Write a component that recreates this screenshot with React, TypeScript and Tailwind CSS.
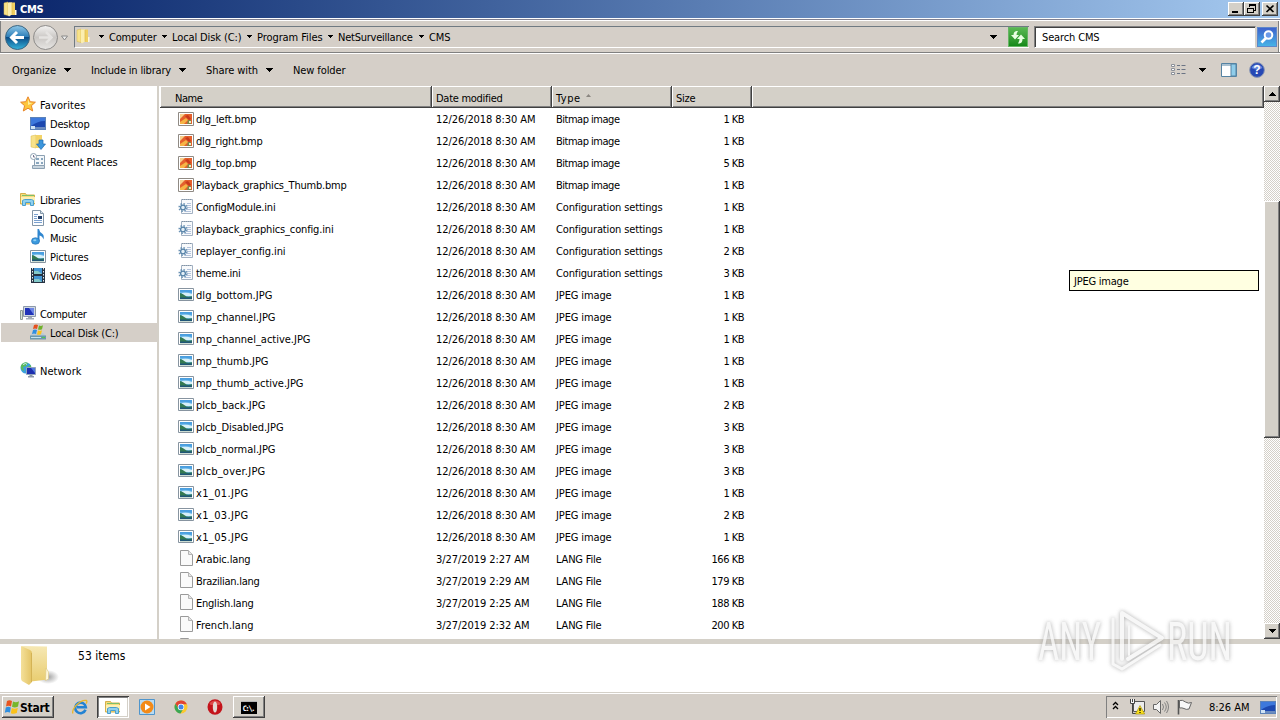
import { useLayoutEffect, useRef, useState, type ReactNode } from "react";

type IconName =
  | "star" | "desktop" | "downloads" | "recent" | "libraries" | "documents" | "music"
  | "pictures" | "videos" | "computer" | "disk" | "network" | "bmp" | "ini" | "jpg" | "file";

// Label with a fixed advance: spreads or tightens the letters to fill w pixels
function Label({ w, children, className = "" }: { w: number; children: string; className?: string }) {
  const ref = useRef<HTMLSpanElement | null>(null);
  const [spacing, setSpacing] = useState(0);

  useLayoutEffect(() => {
    const el = ref.current;
    if (!el) return;
    const prev = el.style.letterSpacing;
    el.style.letterSpacing = "0px";
    const natural = el.getBoundingClientRect().width;
    el.style.letterSpacing = prev;
    setSpacing((w - 0.5 - natural) / children.length);
  }, [w, children]);

  return (
    <span ref={ref} className={`inline-block shrink-0 whitespace-pre pt-[2px] ${className}`} style={{ letterSpacing: `${spacing}px` }}>
      {children}
    </span>
  );
}

function Svg({ size = 16, children, className = "" }: { size?: number; children: ReactNode; className?: string }) {
  return (
    <svg width={size} height={size} viewBox="0 0 16 16" className={`block shrink-0 ${className}`}>
      {children}
    </svg>
  );
}

function FolderIcon() {
  return (
    <Svg>
      <path d="M2 2 6 1v13.500l-4-1z" fill="#f8e28a" stroke="#d9b84c" strokeWidth=".5" />
      <path d="M7 1.500h6V14H7z" fill="#f0cf62" />
      <path d="M6 1.500h4v12l-3 2-1-1z" fill="#fbeeb0" />
      <path d="M10 2v11.500" stroke="#dcb94c" strokeWidth=".7" />
      <path d="M13 9h1.500v5H13z" fill="#fff8dc" />
    </Svg>
  );
}

function LibraryFolder({ size = 16 }: { size?: number }) {
  return (
    <Svg size={size}>
      <path d="M.5 2.500h5l1 1.500h8v9H.5z" fill="#f6dc7c" stroke="#d5b04a" />
      <path d="M2 4.500h12" stroke="#7bbf6a" />
      <path d="M1 6h14v6H1z" fill="#fdf0b4" />
      <path d="M2.500 14.500v-5l2-1h7l2 1v5h-3v-3h-5v3z" fill="#8fd0ee" stroke="#4a9fcd" />
    </Svg>
  );
}

function MonitorIcon({ size = 16 }: { size?: number }) {
  return (
    <Svg size={size}>
      <path d="M0 2h16v13H0z" fill="#5c82b8" />
      <path d="M1 3h14v9H1z" fill="#1c48b0" />
      <path d="M1 3h14v3C9 6 5 8 1 11z" fill="#3d78dc" />
      <path d="M1 12h14v2H1z" fill="#6c8cc0" />
      <path d="M1 11h4v3H1z" fill="#cfe3f5" />
    </Svg>
  );
}

function WindowsFlag({ size = 16 }: { size?: number }) {
  return (
    <Svg size={size}>
      <path d="M3 2q2.500-1.400 5 0L7 7.500q-2.500-1.300-5 0z" fill="#e8541f" />
      <path d="M9 2.500q3 1.500 6-.3l-1 5.300q-3 1.800-6 .3z" fill="#77b62a" />
      <path d="M1.800 8.500q2.500-1.300 5 0L6 13.500q-2.600-1.200-5.200.2z" fill="#2f8fe0" />
      <path d="M7.800 9q3 1.400 6-.3l-1 5.300q-3 1.500-6 .2z" fill="#fbc21a" />
    </Svg>
  );
}

function Icon({ name }: { name: IconName }) {
  switch (name) {
    case "star":
      return (
        <Svg>
          <path d="M8 .8 10.200 5.700l5.200.5-4 3.500 1.300 5.300L8 12.200 3.300 15l1.300-5.300-4-3.500 5.200-.5z" fill="#fdc63c" stroke="#e8852a" />
          <path d="M8 3 9.300 6.800 12.500 7 8 9z" fill="#fff0a0" />
        </Svg>
      );
    case "desktop":
      return <MonitorIcon />;
    case "downloads":
      return (
        <Svg>
          <path d="M1 2 6 1v13l-5-1z" fill="#f8e28a" stroke="#d9b84c" strokeWidth=".5" />
          <path d="M6 1h6v13H6z" fill="#f3d368" />
          <path d="M9 6h4v4h2.500L11 15.500 6.500 10H9z" fill="#3c96dc" stroke="#1d6ab0" strokeWidth=".7" />
        </Svg>
      );
    case "recent":
      return (
        <Svg>
          <path d="M4.500 2.500h10v10h-10z" fill="#f3f7fa" stroke="#8ca0b2" />
          <path d="M6 5h3v2H6zM11 5h2v2h-2zM6 9h3v2H6zM11 9h2v2h-2z" fill="#88a5bd" />
          <path d="M2.500 12.500h12v3h-12z" fill="#c9d5de" stroke="#8ca0b2" />
          <circle cx="3.500" cy="3.500" r="3" fill="#fff" stroke="#8fa3b3" />
          <path d="M3.500 2v2h1.500" fill="none" stroke="#557" strokeWidth=".8" />
        </Svg>
      );
    case "libraries":
      return <LibraryFolder />;
    case "documents":
      return (
        <Svg>
          <path d="M2.500.5h8l3 3v12h-11z" fill="#fbfdff" stroke="#8396a8" />
          <path d="M10.500.5v3h3" fill="#d6e2ec" stroke="#8396a8" />
          <path d="M4 4.500h4M4 6.500h3M4 8.500h3M4 10.500h8M4 12.500h8" stroke="#7aa0cf" />
          <path d="M8 6h4v3H8z" fill="#24406a" />
        </Svg>
      );
    case "music":
      return (
        <Svg>
          <path d="M7.500 0h1.500q.5 3 3 4.500t1.500 6q-1-3.500-4-4v6H7.500z" fill="#2f86cf" />
          <ellipse cx="5.500" cy="12" rx="4" ry="3.300" fill="#3b9ade" stroke="#1e6bb2" strokeWidth=".6" />
          <ellipse cx="4.800" cy="11.300" rx="1.600" ry="1" fill="#8fd0f5" />
        </Svg>
      );
    case "pictures":
    case "jpg":
      return (
        <Svg>
          <path d="M.5 2.500h15v12H.5z" fill="#fff" stroke="#8794a0" />
          <path d="M2 4h12v9H2z" fill="#6db8ea" />
          <path d="M2 4h12v3Q8 5 2 6z" fill="#4a9fe0" />
          <path d="M4 7q5-1 10 1v2H4z" fill="#d8f0f8" />
          <path d="M2 7q3 .5 5 2.500t7 .8v3H2z" fill="#347a52" />
          <path d="M2 11.500h12V13H2z" fill="#1f5678" />
        </Svg>
      );
    case "videos":
      return (
        <Svg>
          <path d="M1 1h14v15H1z" fill="#263343" />
          <path d="M4 1h8v6H4zM4 9h8v6H4z" fill="#4496d4" />
          <path d="M4 4h4l4 3H4zM4 12h5l3 3H4z" fill="#83c9c9" />
          <path d="M2.500 1v14M13.500 1v14" stroke="#e5edf3" strokeDasharray="1.500 1.500" />
        </Svg>
      );
    case "computer":
      return (
        <Svg>
          <path d="M.5 5.500h2v9h-2z" fill="#d9e4d4" stroke="#8d9a98" />
          <path d="M3.500 1.500h12v10h-12z" fill="#cfd8e2" stroke="#8d99aa" />
          <path d="M5 3h9v7H5z" fill="#2033b8" />
          <path d="M9 3h5v7z" fill="#6d86e6" />
          <path d="M8 12h4v1h2v1.500H6V13h2z" fill="#a3adb8" />
        </Svg>
      );
    case "disk":
      return (
        <Svg>
          <path d="M2 9h11l3 3H0z" fill="#b9cad6" />
          <path d="M0 11.500h16V15.500H0z" fill="#6c98ac" />
          <path d="M1 13.500h10" stroke="#c6e3ee" />
          <path d="M12 13h3v1h-3z" fill="#4fd048" />
          <path d="M4 1q2-1 4 0L7 5Q5 4 3 5z" fill="#e6501e" />
          <path d="M9 1.500q2 1 4-.2l-1 4q-2 1-4 .2z" fill="#6fb12a" />
          <path d="M3 6q2-1 4 0l-1 4q-2-1-4 0z" fill="#2f8fe0" />
          <path d="M8 6.500q2 1 4-.2l-1 4q-2 1-4 .2z" fill="#fbc21a" />
        </Svg>
      );
    case "network":
      return (
        <Svg>
          <circle cx="6" cy="6" r="5.500" fill="#3aa0dc" />
          <path d="M2 2q3-3 6-1L6 4 3 5l1 4-2-1Q-.5 5 2 2zM7 5l4-2v3z" fill="#5cbb58" />
          <path d="M3 2.500q3-2 4 0" stroke="#c9efff" fill="none" />
          <path d="M6.500 5.500h9v7h-9z" fill="#1d2fae" stroke="#93a4bb" />
          <path d="M11 6h4v5z" fill="#4f78e0" />
          <path d="M9.500 13h3v1h1.500v1.500H8V14h1.500z" fill="#8c98a8" />
        </Svg>
      );
    case "bmp":
      return (
        <Svg>
          <path d="M.5 2.500h15v13H.5z" fill="#fff" stroke="#8f8a84" />
          <path d="M2 4h12v10H2z" fill="#e4602c" />
          <path d="M2 4h5L2 9z" fill="#f7cf8a" />
          <path d="M2 12l6-4 2 2-4 4H2z" fill="#f6b545" />
          <path d="M7 6l3-1 3 4-2 1z" fill="#c8391c" />
          <path d="M10 10h3v4H9z" fill="#7c8b4a" />
          <path d="M11 11h2v2h-2z" fill="#efe7c0" />
        </Svg>
      );
    case "ini":
      return (
        <Svg>
          <path d="M3.500 1.500h11v14h-11z" fill="#f8fafc" stroke="#a3b1c2" />
          <path d="M4 1.500h10" stroke="#8394a4" strokeDasharray="1 1" />
          <path d="M9 5.500h4M9 7.500h4M9 9.500h4M8 11.500h5M7 13.500h6" stroke="#b3c3dc" />
          <circle cx="5" cy="9.500" r="3.800" fill="none" stroke="#6c93b5" strokeWidth="1.600" strokeDasharray="1.500 1.480" />
          <circle cx="5" cy="9.500" r="2.400" fill="#e4eff7" stroke="#5582a8" strokeWidth="1.300" />
        </Svg>
      );
    case "file":
      return (
        <Svg>
          <path d="M2.500.5h8l4 4v11h-12z" fill="#fafafa" stroke="#9a9a9a" />
          <path d="M10.500.5v4h4" fill="#e4e4e4" stroke="#b4b4b4" />
        </Svg>
      );
  }
}

const nav: ({ name: string; icon: IconName; w: number; child?: boolean; active?: boolean } | null)[] = [
  { name: "Favorites", icon: "star", w: 46 },
  { name: "Desktop", icon: "desktop", w: 40, child: true },
  { name: "Downloads", icon: "downloads", w: 53, child: true },
  { name: "Recent Places", icon: "recent", w: 68, child: true },
  null,
  { name: "Libraries", icon: "libraries", w: 41 },
  { name: "Documents", icon: "documents", w: 54, child: true },
  { name: "Music", icon: "music", w: 27, child: true },
  { name: "Pictures", icon: "pictures", w: 39, child: true },
  { name: "Videos", icon: "videos", w: 32, child: true },
  null,
  { name: "Computer", icon: "computer", w: 47 },
  { name: "Local Disk (C:)", icon: "disk", w: 69, child: true, active: true },
  null,
  { name: "Network", icon: "network", w: 42 },
];

const files: [string, number, IconName, string][] = [
  ["dlg_left.bmp", 61, "bmp", "1 KB"],
  ["dlg_right.bmp", 67, "bmp", "1 KB"],
  ["dlg_top.bmp", 61, "bmp", "5 KB"],
  ["Playback_graphics_Thumb.bmp", 151, "bmp", "1 KB"],
  ["ConfigModule.ini", 80, "ini", "1 KB"],
  ["playback_graphics_config.ini", 138, "ini", "1 KB"],
  ["replayer_config.ini", 90, "ini", "2 KB"],
  ["theme.ini", 45, "ini", "3 KB"],
  ["dlg_bottom.JPG", 77, "jpg", "1 KB"],
  ["mp_channel.JPG", 80, "jpg", "1 KB"],
  ["mp_channel_active.JPG", 115, "jpg", "1 KB"],
  ["mp_thumb.JPG", 73, "jpg", "1 KB"],
  ["mp_thumb_active.JPG", 108, "jpg", "1 KB"],
  ["plcb_back.JPG", 70, "jpg", "2 KB"],
  ["plcb_Disabled.JPG", 88, "jpg", "3 KB"],
  ["plcb_normal.JPG", 80, "jpg", "3 KB"],
  ["plcb_over.JPG", 70, "jpg", "3 KB"],
  ["x1_01.JPG", 53, "jpg", "1 KB"],
  ["x1_03.JPG", 53, "jpg", "2 KB"],
  ["x1_05.JPG", 53, "jpg", "1 KB"],
  ["Arabic.lang", 55, "file", "166 KB"],
  ["Brazilian.lang", 64, "file", "179 KB"],
  ["English.lang", 58, "file", "188 KB"],
  ["French.lang", 58, "file", "200 KB"],
];

const langDates = ["3/27/2019 2:27 AM", "3/27/2019 2:29 AM", "3/27/2019 2:25 AM", "3/27/2019 2:32 AM"];

const types: Record<string, [string, number]> = {
  bmp: ["Bitmap image", 64],
  ini: ["Configuration settings", 107],
  jpg: ["JPEG image", 56],
  file: ["LANG File", 46],
};

function Arrow({ up = false, small = false }: { up?: boolean; small?: boolean }) {
  if (small) {
    return (
      <svg width="5" height="3" className="block shrink-0" shapeRendering="crispEdges">
        <path d="M0 0h5v1H4v1H3v1H2V2H1V1H0z" />
      </svg>
    );
  }
  return (
    <svg width="7" height="4" className={`block shrink-0 ${up ? "rotate-180" : ""}`} shapeRendering="crispEdges">
      <path d="M0 0h7v1H6v1H5v1H4v1H3V3H2V2H1V1H0z" />
    </svg>
  );
}

const raised =
  "bg-[#d4d0c8] shadow-[inset_-1px_-1px_0_#404040,inset_1px_1px_0_#ffffff,inset_-2px_-2px_0_#808080]";

function TitleBar() {
  return (
    <div className="flex h-[18px] items-center bg-linear-to-r from-[#0a246a] to-[#a6caf0] pl-[2px] pr-[2px]">
      <FolderIcon />
      <Label w={24} className="ml-[2px] text-[11px] font-bold text-white">CMS</Label>
      <div className="ml-auto flex h-[14px]">
        <div className={`flex w-4 items-end pb-[3px] pl-1 ${raised}`}>
          <div className="h-[2px] w-[6px] bg-black" />
        </div>
        <div className={`w-4 ${raised}`}>
          <svg width="16" height="14" shapeRendering="crispEdges">
            <path d="M5.500 5V3.500h6v5H10M5 2.500h7M3.500 6.500h6v4h-6zM3 6h7" fill="none" stroke="#000" />
          </svg>
        </div>
        <div className={`ml-[2px] w-4 ${raised}`}>
          <svg width="16" height="14">
            <path d="M4.500 3.500l7 6.500M11.500 3.500l-7 6.500" stroke="#000" strokeWidth="1.700" />
          </svg>
        </div>
      </div>
    </div>
  );
}

function AddressBar() {
  const crumbs: [string, number, string][] = [
    ["Computer", 48, "w-[53px]"],
    ["Local Disk (C:)", 70, "w-[75px]"],
    ["Program Files", 66, "w-[71px]"],
    ["NetSurveillance", 75, "w-[81px]"],
    ["CMS", 22, "w-6"],
  ];
  return (
    <div className="flex h-9 border-t border-white bg-[#d5cfc8] shadow-[inset_0_1px_0_#808090,inset_0_2px_0_#ffffff,inset_0_-1px_0_#ffffff,inset_0_-2px_0_#808080,inset_1px_0_0_#808080,inset_-1px_0_0_#ffffff,inset_-2px_0_0_#808080]">
      <div className="flex pl-1 pt-[5px]">
        <svg width="70" height="28" className="block">
          <defs>
            <linearGradient id="back" x1="0" y1="0" x2="0" y2="1">
              <stop offset="0" stopColor="#8fc8e8" />
              <stop offset=".48" stopColor="#2b7db8" />
              <stop offset=".5" stopColor="#0a4d88" />
              <stop offset="1" stopColor="#36b4dc" />
            </linearGradient>
            <linearGradient id="fwd" x1="0" y1="0" x2="0" y2="1">
              <stop offset="0" stopColor="#f4f3f2" />
              <stop offset=".5" stopColor="#cac7c4" />
              <stop offset="1" stopColor="#e8e6e4" />
            </linearGradient>
          </defs>
          <circle cx="13.500" cy="13.500" r="12" fill="url(#back)" stroke="#3c6580" />
          <path d="M20 13.500H8M13 8l-5.500 5.500L13 19" fill="none" stroke="#fff" strokeWidth="3" />
          <circle cx="41.500" cy="13.500" r="12" fill="url(#fwd)" stroke="#8d8b89" />
          <path d="M35 13.500h12M42 8l5.500 5.500L42 19" fill="none" stroke="#e5e3e1" strokeWidth="2.500" />
          <path d="M57.500 12h6l-3 4z" fill="#eee" stroke="#888" />
        </svg>
      </div>
      <div className="mt-[7px] flex h-[22px] w-[955px] items-center border-b border-l border-t border-b-white border-l-[#707a82] border-t-[#707a82] text-[11px]">
        <div className="pb-[2px]"><FolderIcon /></div>
        <div className="ml-2 flex items-center pb-px">
          {crumbs.map(([name, w, box]) => (
            <div key={name} className="flex items-center">
              <Arrow small />
              <div className={`ml-[5px] flex shrink-0 ${box}`}>
                <Label w={w}>{name}</Label>
              </div>
            </div>
          ))}
        </div>
        <div className="ml-auto mr-[11px]"><Arrow /></div>
        <div className="mr-[1px] flex size-5 items-center justify-center border border-[#66b564] bg-linear-to-b from-[#58b852] to-[#138a18]">
          <svg width="18" height="18">
            <path d="M9 3H7.500Q4.500 3.500 4.500 7H2l4 4.500L10 7H7.500Q7.500 5 9 3z" fill="#e9ffe2" />
            <path d="M9 15.500h1.500Q13.500 15 13.500 11H16l-4-4.500L8 11h2.500q0 2.500-1.500 4.500z" fill="#e9ffe2" />
          </svg>
        </div>
      </div>
      <div className="ml-[5px] mt-[7px] flex h-[22px] w-[222px] items-center border border-b-white border-l-[#808080] border-r-[#d4d0c8] border-t-[#808080] bg-white pl-[7px] text-[11px] shadow-[inset_1px_1px_0_#404040]">
        <Label w={58}>Search CMS</Label>
      </div>
      <div className="ml-px mt-[8px] size-5 border border-[#5d87c9] bg-linear-to-b from-[#3e62cc] to-[#46b2e6]">
        <svg width="18" height="18">
          <circle cx="10.500" cy="7" r="3.800" fill="#6b9ae8" stroke="#fff" strokeWidth="2" />
          <path d="M8 10l-4.500 4.500" stroke="#fff" strokeWidth="2.600" />
        </svg>
      </div>
    </div>
  );
}

function Toolbar() {
  return (
    <div className="flex h-8 items-center bg-[#d5cfc8] pl-3 text-[11px]">
      <Label w={44.5}>Organize</Label>
      <div className="ml-2"><Arrow /></div>
      <Label w={80.5} className="ml-5">Include in library</Label>
      <div className="ml-2"><Arrow /></div>
      <Label w={52.5} className="ml-5">Share with</Label>
      <div className="ml-2"><Arrow /></div>
      <Label w={53} className="ml-5">New folder</Label>
      <svg width="17" height="14" className="ml-auto">
        <path d="M1.500 1.500h3v2h-3zM1.500 5.500h3v2h-3zM1.500 9.500h3v2h-3z" fill="#fff" stroke="#8b9099" />
        <path d="M7 2.500h3M7 6.500h3M7 10.500h3M11.500 2.500h4M11.500 6.500h4M11.500 10.500h4" stroke="#6b7484" />
      </svg>
      <div className="ml-[12px]"><Arrow /></div>
      <svg width="16" height="14" className="ml-[15px]">
        <path d="M.5.500h15v13H.5z" fill="#fff" stroke="#5583a3" />
        <path d="M1 2h9" stroke="#5583a3" />
        <path d="M10 1h5v12h-5z" fill="#8fcdea" stroke="#5583a3" />
      </svg>
      <svg width="16" height="16" className="ml-3 mr-[15px]">
        <circle cx="8" cy="8" r="7.400" fill="#2648b4" stroke="#8c98b4" />
        <path d="M2.500 6a6 6 0 0 1 11 0q-5 3-11 0z" fill="#6688dc" />
        <text x="8" y="12.200" textAnchor="middle" fontSize="12" fontWeight="bold" fill="#fff" fontFamily="Liberation Sans">?</text>
      </svg>
    </div>
  );
}

function Sidebar() {
  return (
    <div className="w-[157px] shrink-0 bg-white pl-px pt-[9px] text-[11px]">
      {nav.map((item, i) =>
        item ? (
          <div
            key={item.name}
            className={`flex h-[19px] items-center ${item.child ? "pl-[29px]" : "pl-[19px]"} ${item.active ? "bg-[#d5cfc8]" : ""}`}
          >
            <div className="pb-[2px]"><Icon name={item.icon} /></div>
            <Label w={item.w} className="ml-1">{item.name}</Label>
          </div>
        ) : (
          <div key={i} className="h-[19px]" />
        ),
      )}
    </div>
  );
}

const headCell =
  "flex h-[22px] items-center shadow-[inset_-1px_-1px_0_#404040,inset_1px_1px_0_#ffffff,inset_-2px_-2px_0_#808080] bg-[#d4d0c8]";

function FileList() {
  return (
    <div className="flex min-w-0 flex-1 flex-col overflow-hidden bg-white text-[11px]">
      <div className="flex h-[22px] shrink-0">
        <div className={`w-[272px] pl-[15px] pt-px ${headCell}`}><Label w={28}>Name</Label></div>
        <div className={`w-[120px] pl-1 pt-px ${headCell}`}><Label w={67}>Date modified</Label></div>
        <div className={`w-[120px] pl-1 pt-px ${headCell}`}>
          <Label w={25}>Type</Label>
          <svg width="5" height="3" className="mb-1 ml-[5px]"><path d="M0 3 2.500 0 5 3z" fill="#8a8680" /></svg>
        </div>
        <div className={`w-20 pl-1 pt-px ${headCell}`}><Label w={20}>Size</Label></div>
        <div className={`flex-1 ${headCell}`} />
      </div>
      {files.map(([name, w, kind, size], i) => (
        <div key={name} className="flex h-[22px] shrink-0 items-center">
          <div className="flex w-[276px] items-center pl-[18px]">
            <div className="pb-[2px]"><Icon name={kind} /></div>
            <Label w={w} className="ml-[2px]">{name}</Label>
          </div>
          <div className="flex w-[120px]">
            {i < 20 ? <Label w={100}>12/26/2018 8:30 AM</Label> : <Label w={94}>{langDates[i - 20]}</Label>}
          </div>
          <div className="flex w-[120px]"><Label w={types[kind][1]}>{types[kind][0]}</Label></div>
          <div className="flex w-[68px] justify-end">
            <Label w={size.length > 4 ? 33 : 21}>{size}</Label>
          </div>
        </div>
      ))}
      {/* next row, cut off by the bottom edge */}
      <div className="shrink-0 pl-[18px] pt-[2px]"><Icon name="file" /></div>
    </div>
  );
}

function ScrollBar() {
  return (
    <div className="flex w-4 shrink-0 flex-col bg-[repeating-conic-gradient(#ffffff_0_25%,#d4d0c8_0_50%)] bg-size-[2px_2px]">
      <div className={`flex h-4 items-center justify-center ${raised}`}><Arrow up /></div>
      <div className={`mt-[99px] h-[237px] ${raised}`} />
      <div className={`mt-auto flex h-4 items-center justify-center ${raised}`}><Arrow /></div>
    </div>
  );
}

function DetailsPane() {
  return (
    <div className="flex h-12 shrink-0 bg-white">
      <svg width="60" height="48" className="block">
        <defs>
          <linearGradient id="fold" x1="0" y1="0" x2="1" y2="0">
            <stop offset="0" stopColor="#f4e09a" />
            <stop offset="1" stopColor="#e3c364" />
          </linearGradient>
          <linearGradient id="foldBack" x1="0" y1="0" x2="0" y2="1">
            <stop offset="0" stopColor="#f6e8b4" />
            <stop offset="1" stopColor="#e9cd70" />
          </linearGradient>
          <radialGradient id="shade">
            <stop offset="0" stopColor="#a0a0a0" />
            <stop offset="1" stopColor="#ffffff" />
          </radialGradient>
        </defs>
        <ellipse cx="48" cy="33" rx="11" ry="7" fill="url(#shade)" />
        <path d="M22 2l25 .5v22l1 11-17 2z" fill="url(#foldBack)" />
        <path d="M46 24l2.500 4v7l-3 1.500z" fill="#fff8dc" stroke="#dcc880" strokeWidth=".6" />
        <path d="M21 2l9 4q2 1 2 3v29l-3 3-7-4q-1-1-1-3z" fill="url(#fold)" />
        <path d="M31.500 9v29" stroke="#cfae50" strokeWidth=".8" />
      </svg>
      <Label w={48} className="ml-[18px] mt-[3px] text-[12px]">53 items</Label>
    </div>
  );
}

function Taskbar() {
  return (
    <div className="flex h-7 shrink-0 items-center border-t border-[#d4d0c8] bg-[#d5cfc8] pt-px shadow-[inset_0_1px_0_#ffffff]">
      <div className={`ml-[2px] flex h-[22px] w-[52px] items-center pl-[2px] ${raised}`}>
        <WindowsFlag />
        <Label w={30} className="pt-px text-[12px] font-bold">Start</Label>
      </div>
      <Svg className="ml-[18px]">
        <path d="M13.500 10.800A5.300 5.300 0 1 1 13.800 8.200H5" fill="none" stroke="#2383d3" strokeWidth="2.600" />
        <path d="M1 14.500Q-.5 12 4 6.500 10 .5 14.500 1.500q1 1-.5 3" fill="none" stroke="#e9b72c" strokeWidth="1.300" />
      </Svg>
      <div className="ml-[9px] flex h-[22px] w-[32px] items-center justify-center bg-white shadow-[inset_1px_1px_0_#404040,inset_-1px_-1px_0_#ffffff,inset_2px_2px_0_#808080,inset_-2px_-2px_0_#d4d0c8]">
        <LibraryFolder />
      </div>
      <Svg className="ml-[10px]">
        <path d="M.5.500h15v15H.5z" fill="#b8dbf3" stroke="#4f95cc" />
        <circle cx="8" cy="8" r="6.500" fill="#f38a18" />
        <path d="M6 4.500 11.500 8 6 11.500z" fill="#fff" />
      </Svg>
      <Svg className="ml-[18px]">
        <circle cx="8" cy="8" r="6.500" fill="#fbc92f" />
        <path d="M2.400 4.700A6.500 6.500 0 0 1 13.900 5.200H8L5.500 9.500z" fill="#e04434" />
        <path d="M2.400 4.700A6.500 6.500 0 0 0 7.500 14.500L10.500 9.500H5.500z" fill="#3aa655" />
        <circle cx="8" cy="8" r="3.200" fill="#fff" />
        <circle cx="8" cy="8" r="2.500" fill="#4285e8" />
      </Svg>
      <Svg className="ml-[18px]">
        <ellipse cx="8" cy="8" rx="7.500" ry="7.700" fill="#c4141b" />
        <path d="M2.500 4q5.500-5 11 0l-1 2h-9z" fill="#dd4a4a" />
        <ellipse cx="8" cy="8" rx="2.200" ry="5.600" fill="#e4dad4" />
      </Svg>
      <div className={`ml-[10px] flex h-[22px] w-[32px] items-center justify-center ${raised}`}>
        <svg width="16" height="13">
          <path d="M0 0h16v13H0z" fill="#000" />
          <path d="M0 .5h16" stroke="#b5b5b5" />
          <text x="1.500" y="9.500" fontSize="7.500" fontWeight="bold" fill="#fff" fontFamily="DejaVu Sans Mono" textLength="13">C:\.</text>
        </svg>
      </div>
      <div className="ml-auto mr-[3px] flex h-[22px] w-[171px] items-center shadow-[inset_1px_1px_0_#808080,inset_-1px_-1px_0_#ffffff]">
        <svg width="7" height="9" className="mb-1 ml-[6px]">
          <path d="M1 4l2.500-2.500L6 4M1 8l2.500-2.500L6 8" fill="none" stroke="#000" strokeWidth="1.300" />
        </svg>
        <Svg className="ml-[10px]">
          <path d="M4.500 2.500h11v10h-11z" fill="#ececec" stroke="#555" />
          <path d="M1 0h5v5H1z" fill="#f8f8f8" />
          <path d="M1.500 0v4.500h4V0M3.500 0v3M3.500 5v9.500h5" fill="none" stroke="#444" />
          <path d="M11 6.500l4.700 8.500H6.500z" fill="#fbe01e" stroke="#a08b00" strokeWidth=".6" />
          <path d="M11 9v3M11 13v1" stroke="#000" strokeWidth="1.200" />
        </Svg>
        <Svg className="ml-2">
          <path d="M.5 5.500h3l4-4v13l-4-4h-3z" fill="#f3f3f3" stroke="#666" />
          <path d="M9.500 5q2 3 0 6M11.500 3.500q3.500 4.500 0 9M13.500 2q4 6 0 12" fill="none" stroke="#777" strokeWidth=".9" />
        </Svg>
        <Svg className="ml-2">
          <path d="M1.500 1v14.500" stroke="#555" strokeWidth="1.600" />
          <path d="M2.500 1.500q3-1 6 1.500 3 2 6 .5l-2.500 6.500q-3 1-5-.5-2-1-4.500-.5z" fill="#f8f8f8" stroke="#666" />
        </Svg>
        <Label w={41} className="ml-4 text-[11px]">8:26 AM</Label>
        <div className="ml-[10px]"><MonitorIcon /></div>
      </div>
    </div>
  );
}

function Watermark() {
  return (
    <svg
      width="230"
      height="80"
      className="pointer-events-none absolute left-[1030px] top-[602px] opacity-80 drop-shadow-[0_0_2px_#999999]"
    >
      <g fill="#f6f6f6" fontFamily="Roboto, sans-serif" fontSize="54">
        <text x="8" y="58" textLength="63" lengthAdjust="spacingAndGlyphs">ANY</text>
        <text x="137" y="58" textLength="65" lengthAdjust="spacingAndGlyphs">RUN</text>
      </g>
      <g fill="none" stroke="#f6f6f6" strokeLinejoin="round" strokeLinecap="round">
        <path d="M92 57V11l40 25-34 21" strokeWidth="4" />
        <path d="M83 17v45l9 5 38-24" strokeWidth="3" />
        <path d="M99 53V24" strokeWidth="2" />
      </g>
    </svg>
  );
}

export default function App() {
  return (
    <div className="relative flex h-[720px] w-[1280px] flex-col overflow-hidden bg-[#d4d0c8] font-['DejaVu_Sans_Condensed','DejaVu_Sans',sans-serif] font-stretch-condensed leading-[14px] text-black">
      <TitleBar />
      <AddressBar />
      <Toolbar />
      <div className="flex h-[553px] shrink-0">
        <Sidebar />
        <div className="w-[3px] shrink-0 border-r border-white bg-[#d4d0c8]" />
        <FileList />
        <ScrollBar />
      </div>
      <div className="h-[5px] shrink-0 bg-[#d4d0c8]" />
      <DetailsPane />
      <Taskbar />
      <div className="absolute left-[1069px] top-[270px] flex h-[21px] w-[190px] items-center border border-black bg-[#ffffe1] pl-1 pt-px text-[11px]">
        <Label w={55}>JPEG image</Label>
      </div>
      <Watermark />
    </div>
  );
}
